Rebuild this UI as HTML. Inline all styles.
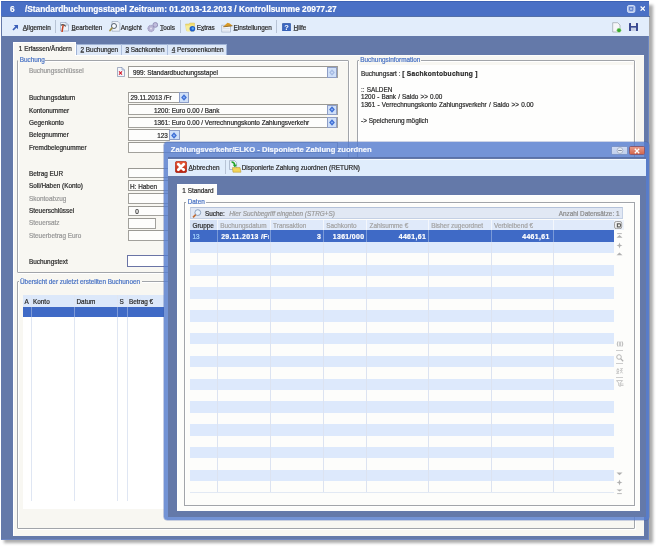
<!DOCTYPE html>
<html><head><meta charset="utf-8"><style>
html,body{margin:0;padding:0;}
body{width:658px;height:548px;overflow:hidden;background:#fff;position:relative;font-family:"Liberation Sans",sans-serif;}
#w{position:absolute;left:0;top:0;width:658px;height:548px;will-change:transform;filter:blur(0.25px);}
.t{position:absolute;line-height:1;white-space:nowrap;-webkit-text-stroke:0.2px currentColor;}
.r{position:absolute;box-sizing:border-box;}
u{text-decoration:underline;text-underline-offset:0px;text-decoration-thickness:0.5px;text-decoration-color:rgba(40,40,40,0.7);}
</style></head><body>
<div id="w">
<div class="r" style="left:3.50px;top:4.50px;width:649.00px;height:538.50px;background:rgba(0,0,0,0.33);filter:blur(1.7px)"></div>
<div class="r" style="left:1.20px;top:1.20px;width:648.00px;height:538.60px;background:#6479a9;box-shadow:inset -0.8px -0.8px 0 rgba(120,150,220,0.6)"></div>
<div class="r" style="left:1.20px;top:1.20px;width:648.10px;height:14.80px;background:#4a70c5;border-top:1px solid #3d62b4"></div>
<div class="r" style="left:1.50px;top:16.00px;width:648.00px;height:1.00px;background:#5470a8;"></div>
<div class="r" style="left:2.00px;top:17.00px;width:647.30px;height:19.00px;background:#e2edfb;"></div>
<div class="r" style="left:12.50px;top:55.00px;width:631.50px;height:481.00px;background:#f8f7f2;border-top:1px solid #fdfdfb;border-left:1px solid #fff"></div>
<div class="t" style="left:10.00px;top:5.02px;font-size:8.3px;color:#fff;font-weight:700;font-style:normal;">6</div>
<div class="t" style="left:25.00px;top:5.02px;font-size:8.3px;color:#fff;font-weight:700;font-style:normal;">/Standardbuchungsstapel Zeitraum: 01.2013-12.2013 / Kontrollsumme 20977.27</div>
<svg class="r" style="left:627.2px;top:5px" width="8.5" height="8" viewBox="0 0 8.5 8"><rect x="0.5" y="0.5" width="7.4" height="7" rx="1.6" fill="#a9bde9" stroke="#e4ecfb" stroke-width="0.8"/><rect x="2.6" y="2.3" width="3.2" height="3" fill="none" stroke="#4f72c4" stroke-width="0.8"/><circle cx="2" cy="6" r="0.45" fill="#fff"/><circle cx="6.4" cy="6" r="0.45" fill="#fff"/></svg>
<svg class="r" style="left:639.6px;top:5.9px" width="5.5" height="5.2" viewBox="0 0 5.5 5.2"><path d="M0.6 0.5 L4.9 4.7 M4.9 0.5 L0.6 4.7" stroke="#fff" stroke-width="1.25"/></svg>
<svg class="r" style="left:12px;top:24px" width="7" height="7" viewBox="0 0 7 7"><path d="M1 6 L5.6 1.4" stroke="#3a5fb8" stroke-width="1.7"/><path d="M1.8 1 L6 1 L6 5.2 Z" fill="#3a5fb8"/></svg>
<div class="t" style="left:22.80px;top:25.38px;font-size:6.4px;color:#2a2a2a;font-weight:400;font-style:normal;"><u>A</u>llgemein</div>
<div class="r" style="left:54.50px;top:20.00px;width:1.00px;height:13.00px;background:#b8c4d6;"></div>
<svg class="r" style="left:60px;top:22px" width="10" height="10" viewBox="0 0 10 10"><path d="M0.5 0.5 H6 L8.5 3 V9 H0.5 Z" fill="#eef3fa" stroke="#8a9cb8" stroke-width="0.6"/><path d="M6 0.5 V3 H8.5" fill="none" stroke="#8a9cb8" stroke-width="0.5"/><path d="M0.8 3.3 Q3.5 1.6 5.8 4.4" fill="none" stroke="#505050" stroke-width="1.1"/><path d="M3.1 3.6 Q2.4 7 2.1 9.6" fill="none" stroke="#c8401e" stroke-width="1.5" stroke-linecap="round"/></svg>
<div class="t" style="left:71.40px;top:25.38px;font-size:6.4px;color:#2a2a2a;font-weight:400;font-style:normal;"><u>B</u>earbeiten</div>
<svg class="r" style="left:108px;top:21px" width="13" height="11" viewBox="0 0 13 11"><path d="M4 0.5 H10 L11.8 2.3 V10.2 H4 Z" fill="#eef2f8" stroke="#8e9cb2" stroke-width="0.6"/><circle cx="6" cy="5" r="2.5" fill="#f8fbff" stroke="#56606e" stroke-width="1"/><path d="M3.9 7.1 L2 9.6" stroke="#a09040" stroke-width="1.7" stroke-linecap="round"/></svg>
<div class="t" style="left:120.80px;top:25.38px;font-size:6.4px;color:#2a2a2a;font-weight:400;font-style:normal;">An<u>s</u>icht</div>
<svg class="r" style="left:147px;top:20.5px" width="11" height="12" viewBox="0 0 11 12"><circle cx="4" cy="7.5" r="3.2" fill="#b8b4d4" stroke="#8e8ab4" stroke-width="0.7" stroke-dasharray="1.2 0.6"/><circle cx="8.3" cy="3.9" r="2.4" fill="#c0bcdc" stroke="#7e7aa8" stroke-width="0.7"/><circle cx="4" cy="7.5" r="1" fill="#e4e2f0"/></svg>
<div class="t" style="left:160.00px;top:25.38px;font-size:6.4px;color:#2a2a2a;font-weight:400;font-style:normal;"><u>T</u>ools</div>
<div class="r" style="left:180.30px;top:20.00px;width:1.00px;height:13.00px;background:#b8c4d6;"></div>
<svg class="r" style="left:184.5px;top:21.5px" width="11" height="11" viewBox="0 0 11 11"><path d="M0.5 2 H3.8 L4.8 1 H9.5 V8.5 H1.5 Z" fill="#f0dc70" stroke="#d8c060" stroke-width="0.5"/><path d="M0.5 3.5 H8.5 L9.8 9.5 H1.8 Z" fill="#f6ec98"/><circle cx="7.4" cy="6.8" r="2.8" fill="#1e5cc8"/><circle cx="7.8" cy="6.5" r="1.2" fill="#5aa8f0"/></svg>
<div class="t" style="left:196.70px;top:25.38px;font-size:6.4px;color:#2a2a2a;font-weight:400;font-style:normal;">E<u>x</u>tras</div>
<svg class="r" style="left:220.5px;top:21.5px" width="12" height="11" viewBox="0 0 12 11"><rect x="0.8" y="3.2" width="8.6" height="6.8" fill="#f4f7fb" stroke="#9aaac2" stroke-width="0.7"/><path d="M1.8 6.5 H8.5 M1.8 8.2 H8.5" stroke="#c8d4e4" stroke-width="0.6"/><path d="M2.2 4.8 L6.5 0.8 L8.8 1.4 L11.5 3.8 L7.5 4.6 Z" fill="#d89a28"/><path d="M2.2 4.8 L7.5 4.3 L11.5 3.8" stroke="#7a5418" stroke-width="0.7" fill="none"/></svg>
<div class="t" style="left:233.50px;top:25.38px;font-size:6.4px;color:#2a2a2a;font-weight:400;font-style:normal;"><u>E</u>instellungen</div>
<div class="r" style="left:276.30px;top:20.00px;width:1.00px;height:13.00px;background:#b8c4d6;"></div>
<svg class="r" style="left:281.8px;top:22.6px" width="9" height="8.5" viewBox="0 0 9 8.5"><rect x="0.3" y="0.3" width="8.4" height="7.9" rx="1" fill="#3a66c0" stroke="#2a4f9a" stroke-width="0.6"/><text x="4.5" y="7" font-family="Liberation Sans" font-size="7.5" font-weight="700" fill="#fff" text-anchor="middle">?</text></svg>
<div class="t" style="left:293.50px;top:25.38px;font-size:6.4px;color:#2a2a2a;font-weight:400;font-style:normal;"><u>H</u>ilfe</div>
<svg class="r" style="left:612px;top:22px" width="10" height="11" viewBox="0 0 10 11"><path d="M0.7 0.7 H5.7 L8 3 V10 H0.7 Z" fill="#f6f6f8" stroke="#9aa0a8" stroke-width="0.7"/><circle cx="7" cy="8.3" r="2.3" fill="#3aaa30" stroke="#e8f8e0" stroke-width="0.5"/></svg>
<svg class="r" style="left:629px;top:23px" width="9" height="8" viewBox="0 0 9 8"><rect x="0" y="0" width="9" height="8" rx="0.5" fill="#3a4a90"/><rect x="2" y="0" width="5" height="3" fill="#e8ecf4"/><rect x="2" y="4.6" width="5" height="3.4" fill="#c8d0e4"/></svg>
<div class="r" style="left:75.50px;top:43.80px;width:151.50px;height:11.20px;background:#dde8f8;border:1px solid #9fb3d6;border-bottom:none;box-sizing:border-box"></div>
<div class="r" style="left:120.60px;top:44.00px;width:0.80px;height:11.00px;background:#aebfdc;"></div>
<div class="r" style="left:167.00px;top:44.00px;width:0.80px;height:11.00px;background:#aebfdc;"></div>
<div class="r" style="left:12.50px;top:42.20px;width:63.30px;height:13.80px;background:#f8f7f2;border:1px solid #fff;border-bottom:none;box-sizing:border-box"></div>
<div class="t" style="left:18.80px;top:46.48px;font-size:6.4px;color:#2a2a2a;font-weight:400;font-style:normal;">1 Erfassen/Ändern</div>
<div class="t" style="left:80.50px;top:46.88px;font-size:6.4px;color:#2a2a2a;font-weight:400;font-style:normal;"><u>2</u> Buchungen</div>
<div class="t" style="left:125.40px;top:46.88px;font-size:6.4px;color:#2a2a2a;font-weight:400;font-style:normal;"><u>3</u> Sachkonten</div>
<div class="t" style="left:171.70px;top:46.88px;font-size:6.4px;color:#2a2a2a;font-weight:400;font-style:normal;"><u>4</u> Personenkonten</div>
<div class="r" style="left:17.20px;top:59.70px;width:331.50px;height:213.00px;background:none;border:1px solid #a2a5aa;box-sizing:border-box;border-radius:1px;box-shadow:1px 1px 0 #fff, inset 1px 1px 0 #fff"></div>
<div class="r" style="left:18.20px;top:57.70px;width:27.00px;height:4.00px;background:#f8f7f2;"></div>
<div class="t" style="left:19.70px;top:57.18px;font-size:6.4px;color:#4872c4;font-weight:400;font-style:normal;">Buchung</div>
<div class="r" style="left:356.80px;top:59.70px;width:278.40px;height:213.00px;background:none;border:1px solid #a2a5aa;box-sizing:border-box;border-radius:1px;box-shadow:1px 1px 0 #fff, inset 1px 1px 0 #fff"></div>
<div class="r" style="left:358.80px;top:57.70px;width:62.50px;height:4.00px;background:#f8f7f2;"></div>
<div class="t" style="left:360.30px;top:57.18px;font-size:6.4px;color:#4872c4;font-weight:400;font-style:normal;">Buchungsinformation</div>
<div class="r" style="left:359.00px;top:65.00px;width:274.00px;height:206.00px;background:#fefefd;"></div>
<div class="r" style="left:17.20px;top:280.50px;width:617.50px;height:248.20px;background:none;border:1px solid #a2a5aa;box-sizing:border-box;border-radius:1px;box-shadow:1px 1px 0 #fff, inset 1px 1px 0 #fff"></div>
<div class="r" style="left:18.50px;top:278.50px;width:123.50px;height:4.00px;background:#f8f7f2;"></div>
<div class="t" style="left:20.00px;top:278.58px;font-size:6.4px;color:#4872c4;font-weight:400;font-style:normal;">Übersicht der zuletzt erstellten Buchunoen</div>
<div class="t" style="left:29.00px;top:67.88px;font-size:6.4px;color:#979797;font-weight:400;font-style:normal;">Buchungsschlüssel</div>
<div class="t" style="left:29.00px;top:95.18px;font-size:6.4px;color:#2a2a2a;font-weight:400;font-style:normal;">Buchungsdatum</div>
<div class="t" style="left:29.00px;top:107.58px;font-size:6.4px;color:#2a2a2a;font-weight:400;font-style:normal;">Kontonummer</div>
<div class="t" style="left:29.00px;top:119.88px;font-size:6.4px;color:#2a2a2a;font-weight:400;font-style:normal;">Gegenkonto</div>
<div class="t" style="left:29.00px;top:132.18px;font-size:6.4px;color:#2a2a2a;font-weight:400;font-style:normal;">Belegnummer</div>
<div class="t" style="left:29.00px;top:144.58px;font-size:6.4px;color:#2a2a2a;font-weight:400;font-style:normal;">Fremdbelegnummer</div>
<div class="t" style="left:29.00px;top:170.98px;font-size:6.4px;color:#2a2a2a;font-weight:400;font-style:normal;">Betrag EUR</div>
<div class="t" style="left:29.00px;top:183.28px;font-size:6.4px;color:#2a2a2a;font-weight:400;font-style:normal;">Soll/Haben (Konto)</div>
<div class="t" style="left:29.00px;top:195.58px;font-size:6.4px;color:#979797;font-weight:400;font-style:normal;">Skontoabzug</div>
<div class="t" style="left:29.00px;top:208.28px;font-size:6.4px;color:#2a2a2a;font-weight:400;font-style:normal;">Steuerschlüssel</div>
<div class="t" style="left:29.00px;top:220.28px;font-size:6.4px;color:#979797;font-weight:400;font-style:normal;">Steuersatz</div>
<div class="t" style="left:29.00px;top:232.88px;font-size:6.4px;color:#979797;font-weight:400;font-style:normal;">Steuerbetrag Euro</div>
<div class="t" style="left:29.00px;top:258.58px;font-size:6.4px;color:#2a2a2a;font-weight:400;font-style:normal;">Buchungstext</div>
<svg class="r" style="left:117px;top:66.5px" width="8" height="10" viewBox="0 0 8 10"><path d="M0.5 0.5 H5 L7.5 3 V9.5 H0.5 Z" fill="#f4f6fa" stroke="#7282a4" stroke-width="0.6"/><path d="M5 0.5 V3 H7.5" fill="none" stroke="#5a7ab0" stroke-width="0.5"/><path d="M2 4.3 L5 7.6 M5 4.3 L2 7.6" stroke="#d41c2c" stroke-width="1.1"/></svg>
<div class="r" style="left:128.00px;top:66.00px;width:209.50px;height:12.00px;background:#fdfdfc;border:1.1px solid #a2a19c;border-top-color:#9a9994;box-sizing:border-box"></div>
<div class="r" style="left:327.30px;top:66.50px;width:10.20px;height:11.20px;background:#d0e0f8;border:1px solid #8e9ec6;box-sizing:border-box"></div>
<svg class="r" style="left:329.4px;top:68.6px" width="6" height="7" viewBox="0 0 6 7"><path d="M3 0.3 L5.9 3.5 L3 6.7 L0.1 3.5 Z" fill="#a6bbe4"/><path d="M3 2.2 L4.2 3.5 L3 4.8 L1.8 3.5 Z" fill="#d0ddf4"/></svg>
<div class="t" style="left:133.00px;top:69.98px;font-size:6.4px;color:#2a2a2a;font-weight:400;font-style:normal;">999: Standardbuchungsstapel</div>
<div class="r" style="left:128.00px;top:91.80px;width:51.50px;height:11.10px;background:#fdfdfc;border:1.1px solid #a2a19c;border-top-color:#9a9994;box-sizing:border-box"></div>
<div class="r" style="left:178.90px;top:92.30px;width:9.80px;height:10.30px;background:#d0e0f8;border:1px solid #8e9ec6;box-sizing:border-box"></div>
<svg class="r" style="left:180.8px;top:93.95px" width="6" height="7" viewBox="0 0 6 7"><path d="M3 0.3 L5.9 3.5 L3 6.7 L0.1 3.5 Z" fill="#3f6fd4"/><path d="M3 2.2 L4.2 3.5 L3 4.8 L1.8 3.5 Z" fill="#8fb4f4"/></svg>
<div class="t" style="left:130.50px;top:95.38px;font-size:6.4px;color:#2a2a2a;font-weight:400;font-style:normal;">29.11.2013 /Fr</div>
<div class="r" style="left:128.00px;top:104.00px;width:209.50px;height:11.30px;background:#fdfdfc;border:1.1px solid #a2a19c;border-top-color:#9a9994;box-sizing:border-box"></div>
<div class="r" style="left:327.30px;top:104.50px;width:10.20px;height:10.50px;background:#d0e0f8;border:1px solid #8e9ec6;box-sizing:border-box"></div>
<svg class="r" style="left:329.4px;top:106.25px" width="6" height="7" viewBox="0 0 6 7"><path d="M3 0.3 L5.9 3.5 L3 6.7 L0.1 3.5 Z" fill="#3f6fd4"/><path d="M3 2.2 L4.2 3.5 L3 4.8 L1.8 3.5 Z" fill="#8fb4f4"/></svg>
<div class="t" style="left:154.00px;top:107.68px;font-size:6.4px;color:#2a2a2a;font-weight:400;font-style:normal;">1200: Euro 0.00 / Bank</div>
<div class="r" style="left:128.00px;top:116.70px;width:209.50px;height:11.20px;background:#fdfdfc;border:1.1px solid #a2a19c;border-top-color:#9a9994;box-sizing:border-box"></div>
<div class="r" style="left:327.30px;top:117.20px;width:10.20px;height:10.40px;background:#d0e0f8;border:1px solid #8e9ec6;box-sizing:border-box"></div>
<svg class="r" style="left:329.4px;top:118.9px" width="6" height="7" viewBox="0 0 6 7"><path d="M3 0.3 L5.9 3.5 L3 6.7 L0.1 3.5 Z" fill="#3f6fd4"/><path d="M3 2.2 L4.2 3.5 L3 4.8 L1.8 3.5 Z" fill="#8fb4f4"/></svg>
<div class="t" style="left:154.00px;top:120.38px;font-size:6.4px;color:#2a2a2a;font-weight:400;font-style:normal;">1361: Euro 0.00 / Verrechnungskonto Zahlungsverkehr</div>
<div class="r" style="left:128.00px;top:129.30px;width:41.50px;height:11.40px;background:#fdfdfc;border:1.1px solid #a2a19c;border-top-color:#9a9994;box-sizing:border-box"></div>
<div class="r" style="left:169.20px;top:129.80px;width:10.40px;height:10.60px;background:#d0e0f8;border:1px solid #8e9ec6;box-sizing:border-box"></div>
<svg class="r" style="left:171.4px;top:131.6px" width="6" height="7" viewBox="0 0 6 7"><path d="M3 0.3 L5.9 3.5 L3 6.7 L0.1 3.5 Z" fill="#3f6fd4"/><path d="M3 2.2 L4.2 3.5 L3 4.8 L1.8 3.5 Z" fill="#8fb4f4"/></svg>
<div class="t" style="right:490.20px;top:133.08px;font-size:6.4px;color:#2a2a2a;font-weight:400;font-style:normal;">123</div>
<div class="r" style="left:128.00px;top:141.50px;width:209.50px;height:11.10px;background:#fdfdfc;border:1.1px solid #a2a19c;border-top-color:#9a9994;box-sizing:border-box"></div>
<div class="r" style="left:128.00px;top:167.50px;width:209.50px;height:10.80px;background:#fdfdfc;border:1.1px solid #a2a19c;border-top-color:#9a9994;box-sizing:border-box"></div>
<div class="r" style="left:128.00px;top:179.80px;width:209.50px;height:11.50px;background:#fdfdfc;border:1.1px solid #a2a19c;border-top-color:#9a9994;box-sizing:border-box"></div>
<div class="t" style="left:130.00px;top:183.68px;font-size:6.4px;color:#2a2a2a;font-weight:400;font-style:normal;">H: Haben</div>
<div class="r" style="left:128.00px;top:192.90px;width:209.50px;height:11.00px;background:#fdfdfc;border:1.1px solid #a2a19c;border-top-color:#9a9994;box-sizing:border-box"></div>
<div class="r" style="left:128.00px;top:205.50px;width:209.50px;height:10.80px;background:#fdfdfc;border:1.1px solid #a2a19c;border-top-color:#9a9994;box-sizing:border-box"></div>
<div class="t" style="left:135.20px;top:208.58px;font-size:6.4px;color:#2a2a2a;font-weight:400;font-style:normal;">0</div>
<div class="r" style="left:128.00px;top:217.80px;width:27.80px;height:11.00px;background:#fdfdfc;border:1.1px solid #a2a19c;border-top-color:#9a9994;box-sizing:border-box"></div>
<div class="r" style="left:128.00px;top:230.10px;width:209.50px;height:11.00px;background:#fdfdfc;border:1.1px solid #a2a19c;border-top-color:#9a9994;box-sizing:border-box"></div>
<div class="r" style="left:127.20px;top:255.20px;width:210.30px;height:11.50px;background:#fff;border:1.3px solid #6a74a6;box-sizing:border-box"></div>
<div class="t" style="left:361.00px;top:70.88px;font-size:6.4px;color:#2a2a2a;font-weight:400;font-style:normal;">Buchungsart : <b style="font-weight:700;letter-spacing:0.3px;font-size:6.6px">[ Sachkontobuchung ]</b></div>
<div class="t" style="left:361.00px;top:86.88px;font-size:6.4px;color:#2a2a2a;font-weight:400;font-style:normal;word-spacing:0.4px">:: SALDEN</div>
<div class="t" style="left:361.00px;top:94.18px;font-size:6.4px;color:#2a2a2a;font-weight:400;font-style:normal;word-spacing:0.3px">1200 - Bank / Saldo &gt;&gt; 0.00</div>
<div class="t" style="left:361.00px;top:101.68px;font-size:6.4px;color:#2a2a2a;font-weight:400;font-style:normal;word-spacing:0.45px">1361 - Verrechnungskonto Zahlungsverkehr / Saldo &gt;&gt; 0.00</div>
<div class="t" style="left:361.00px;top:117.58px;font-size:6.4px;color:#2a2a2a;font-weight:400;font-style:normal;">-&gt; Speicherung möglich</div>
<div class="r" style="left:23.00px;top:295.00px;width:141.00px;height:214.00px;background:#fff;"></div>
<div class="r" style="left:23.00px;top:295.00px;width:141.00px;height:11.50px;background:#dce8fa;"></div>
<div class="r" style="left:23.00px;top:306.50px;width:141.00px;height:10.50px;background:#3f6ac6;"></div>
<div class="r" style="left:31.00px;top:295.00px;width:0.80px;height:205.80px;background:#dfe6f3;"></div>
<div class="r" style="left:31.00px;top:306.50px;width:0.80px;height:10.50px;background:#7d9ad8;"></div>
<div class="r" style="left:74.20px;top:295.00px;width:0.80px;height:205.80px;background:#dfe6f3;"></div>
<div class="r" style="left:74.20px;top:306.50px;width:0.80px;height:10.50px;background:#7d9ad8;"></div>
<div class="r" style="left:117.40px;top:295.00px;width:0.80px;height:205.80px;background:#dfe6f3;"></div>
<div class="r" style="left:117.40px;top:306.50px;width:0.80px;height:10.50px;background:#7d9ad8;"></div>
<div class="r" style="left:126.70px;top:295.00px;width:0.80px;height:205.80px;background:#dfe6f3;"></div>
<div class="r" style="left:126.70px;top:306.50px;width:0.80px;height:10.50px;background:#7d9ad8;"></div>
<div class="t" style="left:24.50px;top:299.38px;font-size:6.4px;color:#2a2a2a;font-weight:400;font-style:normal;">A</div>
<div class="t" style="left:33.00px;top:299.38px;font-size:6.4px;color:#2a2a2a;font-weight:400;font-style:normal;">Konto</div>
<div class="t" style="left:76.50px;top:299.38px;font-size:6.4px;color:#2a2a2a;font-weight:400;font-style:normal;">Datum</div>
<div class="t" style="left:119.50px;top:299.38px;font-size:6.4px;color:#2a2a2a;font-weight:400;font-style:normal;">S</div>
<div class="t" style="left:129.00px;top:299.38px;font-size:6.4px;color:#2a2a2a;font-weight:400;font-style:normal;">Betrag €</div>
<div class="r" style="left:164.30px;top:142.00px;width:484.70px;height:377.50px;background:rgba(86,124,206,0.82);border-radius:3.5px;box-shadow:0 0 0 0.6px rgba(60,90,170,0.5)"></div>
<div class="r" style="left:167.60px;top:157.00px;width:478.20px;height:359.50px;background:#6479a9;"></div>
<div class="r" style="left:167.80px;top:158.50px;width:478.50px;height:17.50px;background:#e0edfc;border-top:0.6px solid #f4f9ff"></div>
<div class="r" style="left:167.60px;top:157.00px;width:478.20px;height:1.30px;background:#5a72aa;"></div>
<div class="r" style="left:176.50px;top:195.30px;width:463.50px;height:315.50px;background:#fdfdfb;border-top:1px solid #fff;border-left:1px solid #fff"></div>
<div class="t" style="left:170.80px;top:146.07px;font-size:7.6px;color:#f4f7fd;font-weight:700;font-style:normal;">Zahlungsverkehr/ELKO - Disponierte Zahlung zuordnen</div>
<div class="r" style="left:610.90px;top:146.00px;width:16.80px;height:9.00px;background:linear-gradient(#cfdaf4,#c2d0ea);border-radius:1.5px;border:0.5px solid #7f96c8"></div>
<svg class="r" style="left:615.5px;top:147px" width="8" height="7" viewBox="0 0 8 7"><circle cx="4" cy="3.5" r="2.9" fill="#e6ecf6" stroke="#8a96ac" stroke-width="0.6"/><path d="M2.2 3.5 H5.8" stroke="#6a7488" stroke-width="0.8"/></svg>
<div class="r" style="left:628.70px;top:146.00px;width:16.50px;height:9.00px;background:linear-gradient(#e89a88,#d4684e);border-radius:1.5px;border:0.5px solid #8a5a70"></div>
<svg class="r" style="left:634px;top:147.5px" width="6" height="6" viewBox="0 0 6 6"><path d="M0.8 0.8 L5.2 5.2 M5.2 0.8 L0.8 5.2" stroke="#fff" stroke-width="1.3"/></svg>
<svg class="r" style="left:175.3px;top:160.8px" width="12" height="12" viewBox="0 0 12 12"><defs><linearGradient id="rg" x1="0" y1="0" x2="0" y2="1"><stop offset="0" stop-color="#ec5a38"/><stop offset="1" stop-color="#b8200e"/></linearGradient></defs><rect x="0.3" y="0.3" width="11.4" height="11.4" rx="2" fill="url(#rg)" stroke="#9a1a0a" stroke-width="0.6"/><path d="M3.3 3.3 L8.7 8.7 M8.7 3.3 L3.3 8.7" stroke="#fff" stroke-width="2.8" stroke-linecap="round"/></svg>
<div class="t" style="left:188.60px;top:164.88px;font-size:6.4px;color:#2a2a2a;font-weight:400;font-style:normal;"><u>A</u>bbrechen</div>
<div class="r" style="left:225.30px;top:160.00px;width:0.90px;height:14.00px;background:#b8c4d6;"></div>
<svg class="r" style="left:228.8px;top:160.3px" width="13" height="13" viewBox="0 0 13 13"><path d="M0.6 0.6 H5.6 L7.6 2.6 V9.5 H0.6 Z" fill="#eef3fa" stroke="#8494ac" stroke-width="0.6"/><path d="M2.5 2 Q5.5 2 5.8 5.2" fill="none" stroke="#22a22a" stroke-width="1.5"/><path d="M3.8 4.8 L5.9 7.4 L8 4.8 Z" fill="#22a22a"/><path d="M3.4 7.6 H11 L12 12.2 H4 Z" fill="#f2d458" stroke="#b09028" stroke-width="0.5"/></svg>
<div class="t" style="left:241.70px;top:164.88px;font-size:6.4px;color:#2a2a2a;font-weight:400;font-style:normal;">Disponierte Zahlung zuordnen (RETURN)</div>
<div class="r" style="left:176.50px;top:184.00px;width:40.70px;height:12.00px;background:#fdfdfb;border-top:1px solid #fff"></div>
<div class="t" style="left:182.30px;top:187.98px;font-size:6.4px;color:#2a2a2a;font-weight:400;font-style:normal;">1 Standard</div>
<div class="r" style="left:184.40px;top:201.60px;width:450.60px;height:304.20px;background:none;border:1px solid #a2a5aa;box-sizing:border-box;box-shadow:1px 1px 0 #fff, inset 1px 1px 0 #fff"></div>
<div class="r" style="left:186.00px;top:198.00px;width:20.00px;height:7.00px;background:#fdfdfb;"></div>
<div class="t" style="left:187.70px;top:199.38px;font-size:6.4px;color:#4872c4;font-weight:400;font-style:normal;">Daten</div>
<div class="r" style="left:189.90px;top:207.30px;width:432.70px;height:11.70px;background:#e1e8f4;border:1px solid #c4d0e4;border-top-color:#b4c2da;box-sizing:border-box"></div>
<svg class="r" style="left:191.5px;top:209px" width="10" height="9" viewBox="0 0 10 9"><circle cx="5.8" cy="3.6" r="2.9" fill="#e8f2fc" stroke="#7890b0" stroke-width="0.8"/><path d="M3.7 5.7 L1 8.3" stroke="#c06a30" stroke-width="1.6"/></svg>
<div class="t" style="left:205.00px;top:211.18px;font-size:6.4px;color:#2a2a2a;font-weight:400;font-style:normal;">Suche:</div>
<div class="t" style="left:229.20px;top:211.18px;font-size:6.4px;color:#9a9a9a;font-weight:400;font-style:italic;">Hier Suchbegriff eingeben (STRG+S)</div>
<div class="t" style="right:38.50px;top:211.18px;font-size:6.4px;color:#8a8a8a;font-weight:400;font-style:normal;">Anzahl Datensätze: 1</div>
<div class="r" style="left:190.00px;top:219.60px;width:424.00px;height:10.80px;background:#e0eafa;"></div>
<div class="r" style="left:614.00px;top:219.60px;width:10.00px;height:10.80px;background:#eef3fb;"></div>
<div class="r" style="left:190.00px;top:219.60px;width:27.20px;height:10.80px;background:#d6e2f6;"></div>
<div class="r" style="left:217.20px;top:219.60px;width:0.90px;height:10.80px;background:#f4f7fc;"></div>
<div class="r" style="left:270.10px;top:219.60px;width:0.90px;height:10.80px;background:#f4f7fc;"></div>
<div class="r" style="left:323.00px;top:219.60px;width:0.90px;height:10.80px;background:#f4f7fc;"></div>
<div class="r" style="left:366.10px;top:219.60px;width:0.90px;height:10.80px;background:#f4f7fc;"></div>
<div class="r" style="left:428.00px;top:219.60px;width:0.90px;height:10.80px;background:#f4f7fc;"></div>
<div class="r" style="left:490.90px;top:219.60px;width:0.90px;height:10.80px;background:#f4f7fc;"></div>
<div class="r" style="left:553.40px;top:219.60px;width:0.90px;height:10.80px;background:#f4f7fc;"></div>
<div class="t" style="left:192.50px;top:223.18px;font-size:6.4px;color:#2a2a2a;font-weight:400;font-style:normal;">Gruppe</div>
<div class="t" style="left:220.30px;top:223.18px;font-size:6.4px;color:#a3a3a3;font-weight:400;font-style:normal;">Buchungsdatum</div>
<div class="t" style="left:273.10px;top:223.18px;font-size:6.4px;color:#a3a3a3;font-weight:400;font-style:normal;">Transaktion</div>
<div class="t" style="left:326.30px;top:223.18px;font-size:6.4px;color:#a3a3a3;font-weight:400;font-style:normal;">Sachkonto</div>
<div class="t" style="left:369.50px;top:223.18px;font-size:6.4px;color:#a3a3a3;font-weight:400;font-style:normal;">Zahlsumme €</div>
<div class="t" style="left:431.20px;top:223.18px;font-size:6.4px;color:#a3a3a3;font-weight:400;font-style:normal;">Bisher zugeordnet</div>
<div class="t" style="left:494.00px;top:223.18px;font-size:6.4px;color:#a3a3a3;font-weight:400;font-style:normal;">Verbleibend €</div>
<svg class="r" style="left:614.2px;top:221.4px" width="9" height="8" viewBox="0 0 9 8"><rect x="0.5" y="0.5" width="7.2" height="7.2" rx="1.8" fill="#f0f0f0" stroke="#8c8c8c" stroke-width="0.8"/><path d="M2.8 2.2 H6.4 Q8.2 4.2 6.4 6.4 H2.8 Z" fill="#5a5a5a"/><circle cx="5" cy="4.4" r="1.1" fill="#f4f4ec"/></svg>
<div class="r" style="left:190.00px;top:230.40px;width:424.00px;height:11.40px;background:#3f6ac6;"></div>
<div class="r" style="left:190.00px;top:241.80px;width:424.00px;height:11.40px;background:#dde9fc;"></div>
<div class="r" style="left:190.00px;top:264.60px;width:424.00px;height:11.40px;background:#dde9fc;"></div>
<div class="r" style="left:190.00px;top:287.40px;width:424.00px;height:11.40px;background:#dde9fc;"></div>
<div class="r" style="left:190.00px;top:310.20px;width:424.00px;height:11.40px;background:#dde9fc;"></div>
<div class="r" style="left:190.00px;top:333.00px;width:424.00px;height:11.40px;background:#dde9fc;"></div>
<div class="r" style="left:190.00px;top:355.80px;width:424.00px;height:11.40px;background:#dde9fc;"></div>
<div class="r" style="left:190.00px;top:378.60px;width:424.00px;height:11.40px;background:#dde9fc;"></div>
<div class="r" style="left:190.00px;top:401.40px;width:424.00px;height:11.40px;background:#dde9fc;"></div>
<div class="r" style="left:190.00px;top:424.20px;width:424.00px;height:11.40px;background:#dde9fc;"></div>
<div class="r" style="left:190.00px;top:447.00px;width:424.00px;height:11.40px;background:#dde9fc;"></div>
<div class="r" style="left:190.00px;top:469.80px;width:424.00px;height:11.40px;background:#dde9fc;"></div>
<div class="r" style="left:217.20px;top:230.40px;width:0.80px;height:262.40px;background:#dce3f1;"></div>
<div class="r" style="left:217.20px;top:230.40px;width:0.80px;height:11.40px;background:#7a9ad8;"></div>
<div class="r" style="left:270.10px;top:230.40px;width:0.80px;height:262.40px;background:#dce3f1;"></div>
<div class="r" style="left:270.10px;top:230.40px;width:0.80px;height:11.40px;background:#7a9ad8;"></div>
<div class="r" style="left:323.00px;top:230.40px;width:0.80px;height:262.40px;background:#dce3f1;"></div>
<div class="r" style="left:323.00px;top:230.40px;width:0.80px;height:11.40px;background:#7a9ad8;"></div>
<div class="r" style="left:366.10px;top:230.40px;width:0.80px;height:262.40px;background:#dce3f1;"></div>
<div class="r" style="left:366.10px;top:230.40px;width:0.80px;height:11.40px;background:#7a9ad8;"></div>
<div class="r" style="left:428.00px;top:230.40px;width:0.80px;height:262.40px;background:#dce3f1;"></div>
<div class="r" style="left:428.00px;top:230.40px;width:0.80px;height:11.40px;background:#7a9ad8;"></div>
<div class="r" style="left:490.90px;top:230.40px;width:0.80px;height:262.40px;background:#dce3f1;"></div>
<div class="r" style="left:490.90px;top:230.40px;width:0.80px;height:11.40px;background:#7a9ad8;"></div>
<div class="r" style="left:553.40px;top:230.40px;width:0.80px;height:262.40px;background:#dce3f1;"></div>
<div class="r" style="left:553.40px;top:230.40px;width:0.80px;height:11.40px;background:#7a9ad8;"></div>
<div class="r" style="left:190.00px;top:492.30px;width:424.00px;height:0.70px;background:#e2e9f4;"></div>
<div class="t" style="left:192.50px;top:234.48px;font-size:6.4px;color:#a8d8ff;font-weight:400;font-style:normal;">13</div>
<div class="t" style="left:221.20px;top:234.06px;font-size:6.9px;color:#fff;font-weight:700;font-style:normal;width:48px;overflow:hidden;letter-spacing:0.35px">29.11.2013 /Fr</div>
<div class="t" style="right:337.10px;top:234.06px;font-size:6.9px;color:#fff;font-weight:700;font-style:normal;">3</div>
<div class="t" style="left:332.80px;top:234.06px;font-size:6.9px;color:#fff;font-weight:700;font-style:normal;width:33px;overflow:hidden;letter-spacing:0.35px">1361/000</div>
<div class="t" style="right:231.90px;top:234.06px;font-size:6.9px;color:#fff;font-weight:700;font-style:normal;letter-spacing:0.35px">4461,61</div>
<div class="t" style="right:108.40px;top:234.06px;font-size:6.9px;color:#fff;font-weight:700;font-style:normal;letter-spacing:0.35px">4461,61</div>
<svg class="r" style="left:616px;top:233px" width="7" height="5" viewBox="0 0 7 5"><path d="M1.2 0.6 H5.8" stroke="#b0b0b0" stroke-width="0.9"/><path d="M0.5 4.8 L3.5 1.9 L6.5 4.8 Z" fill="#b0b0b0"/></svg>
<svg class="r" style="left:616px;top:241.8px" width="7" height="7" viewBox="0 0 7 7"><path d="M3.5 0.6 L4.3 2.7 L6.4 3.5 L4.3 4.3 L3.5 6.4 L2.7 4.3 L0.6 3.5 L2.7 2.7 Z" fill="#b0b0b0"/></svg>
<svg class="r" style="left:616px;top:251.8px" width="7" height="4" viewBox="0 0 7 4"><path d="M0.5 3.3 L3.5 0.6 L6.5 3.3 Z" fill="#b0b0b0"/></svg>
<svg class="r" style="left:615.5px;top:341.2px" width="8" height="6" viewBox="0 0 8 6"><path d="M2 0.4 Q0.4 3 2 5.6 M6 0.4 Q7.6 3 6 5.6" stroke="#b0b0b0" stroke-width="0.9" fill="none"/><path d="M3.4 0.6 V5.4 M4.6 0.6 V5.4" stroke="#b0b0b0" stroke-width="0.7"/></svg>
<div class="r" style="left:616.30px;top:350.00px;width:6.70px;height:0.70px;background:#cdcdcd;"></div>
<svg class="r" style="left:615.8px;top:353.6px" width="8" height="8" viewBox="0 0 8 8"><circle cx="3" cy="3" r="2.3" fill="none" stroke="#b0b0b0" stroke-width="0.9"/><path d="M4.6 4.6 L7.2 7.2" stroke="#b0b0b0" stroke-width="1.3"/></svg>
<div class="r" style="left:616.30px;top:363.30px;width:6.70px;height:0.70px;background:#cdcdcd;"></div>
<svg class="r" style="left:615.8px;top:367.6px" width="8" height="6" viewBox="0 0 8 6"><path d="M0.6 2.6 L1.8 0.5 L3 2.6 M1 1.9 H2.6" stroke="#b0b0b0" stroke-width="0.6" fill="none"/><path d="M4.2 0.6 H6.6 L4.2 2.6 H6.6" stroke="#b0b0b0" stroke-width="0.6" fill="none"/><path d="M0.5 3.6 H3 L0.5 5.4 H3 M4.2 5.4 L5.4 3.4 L6.6 5.4" stroke="#b0b0b0" stroke-width="0.6" fill="none"/></svg>
<div class="r" style="left:616.30px;top:377.00px;width:6.70px;height:0.70px;background:#cdcdcd;"></div>
<svg class="r" style="left:615.8px;top:380.3px" width="8" height="7" viewBox="0 0 8 7"><path d="M0.5 0.6 H6.5 L4.3 3 V6.4 L2.7 5.6 V3 Z" fill="none" stroke="#b0b0b0" stroke-width="0.7"/><path d="M4.8 4 H7.5 M4.8 5.5 H7.5" stroke="#b0b0b0" stroke-width="0.6"/></svg>
<svg class="r" style="left:616px;top:471.5px" width="7" height="4" viewBox="0 0 7 4"><path d="M0.5 0.6 L3.5 3.3 L6.5 0.6 Z" fill="#b0b0b0"/></svg>
<svg class="r" style="left:616px;top:479.2px" width="7" height="7" viewBox="0 0 7 7"><path d="M3.5 0.6 L4.3 2.7 L6.4 3.5 L4.3 4.3 L3.5 6.4 L2.7 4.3 L0.6 3.5 L2.7 2.7 Z" fill="#b0b0b0"/></svg>
<svg class="r" style="left:616px;top:489.2px" width="7" height="5.5" viewBox="0 0 7 5.5"><path d="M0.5 0.4 L3.5 2.6 L6.5 0.4 Z" fill="#b0b0b0"/><path d="M1.2 4.6 H5.8" stroke="#b0b0b0" stroke-width="0.9"/></svg>
</div></body></html>
